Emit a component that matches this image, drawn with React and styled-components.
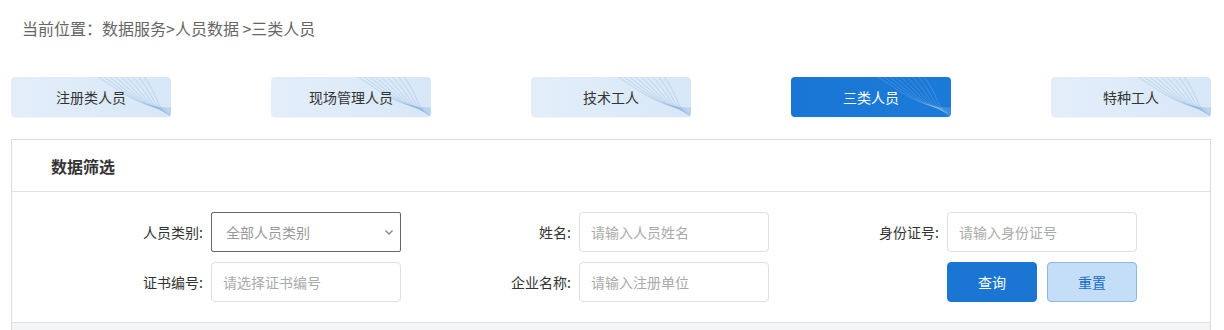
import React from 'react';
import styled, { createGlobalStyle } from 'styled-components';

const GlobalStyle = createGlobalStyle`
  body {
    margin: 0;
    background: #fff;
    font-family: "Noto Sans CJK SC", "Noto Sans", sans-serif;
  }
`;

const Page = styled.div`
  padding: 0 13px 0 11px;
`;

const Crumb = styled.div`
  height: 56px;
  padding-left: 11px;
  display: flex;
  align-items: center;
  font-size: 16px;
  color: #666;
`;

const Tabs = styled.div`
  margin-top: 21px;
  display: flex;
  justify-content: space-between;
  width: 1200px;
`;

const Tab = styled.div`
  position: relative;
  overflow: hidden;
  width: 160px;
  height: 40px;
  border-radius: 4px;
  display: flex;
  align-items: center;
  justify-content: center;
  font-size: 14px;
  color: ${p => (p.$active ? '#fff' : '#333')};
  background: ${p => (p.$active
    ? 'linear-gradient(90deg, #1a76d4, #1b7ad8)'
    : 'linear-gradient(90deg, #e3eefa, #d8e7f7)')};
  box-shadow: 0 1px 1px rgba(0, 0, 0, 0.04);
`;

const TabText = styled.span`
  position: relative;
`;

const Lines = styled.svg`
  position: absolute;
  right: 0;
  bottom: 0;
  pointer-events: none;
`;

const Panel = styled.div`
  margin-top: 22px;
  width: 1198px;
  border: 1px solid #dcdcdc;
  border-bottom: none;
`;

const PanelHead = styled.div`
  height: 51px;
  border-bottom: 1px solid #e2e2e2;
  display: flex;
  align-items: center;
  padding-left: 39px;
  font-size: 16px;
  font-weight: 700;
  color: #333;
`;

const PanelBody = styled.div`
  padding: 20px 0 20px 31px;
  display: grid;
  grid-template-columns: repeat(3, 358px);
  column-gap: 10px;
  row-gap: 10px;
  border-bottom: 1px solid #e2e2e2;
`;

const Footer = styled.div`
  height: 10px;
  background: #f4f5f7;
`;

const Field = styled.div`
  display: flex;
  align-items: center;
  gap: 8px;
`;

const Label = styled.label`
  width: 160px;
  text-align: right;
  font-size: 14px;
  color: #333;
`;

const Input = styled.input`
  box-sizing: border-box;
  width: 190px;
  height: 40px;
  border: 1px solid #dcdfe6;
  border-radius: 4px;
  padding: 0 11px;
  font-family: inherit;
  font-size: 14px;
  color: #333;
  outline: none;
  &::placeholder {
    color: #aaa;
  }
`;

const SelectBox = styled.div`
  position: relative;
  box-sizing: border-box;
  width: 190px;
  height: 40px;
  border: 1px solid #666;
  border-radius: 2px;
  display: flex;
  align-items: center;
  padding: 0 14px;
  font-size: 14px;
  color: #999;
`;

const Chevron = styled.svg`
  position: absolute;
  right: 6px;
  top: 14px;
`;

const Buttons = styled.div`
  padding-left: 168px;
  display: flex;
  gap: 10px;
`;

const Button = styled.button`
  box-sizing: border-box;
  width: 90px;
  height: 40px;
  border-radius: 4px;
  font-family: inherit;
  font-size: 14px;
  cursor: pointer;
  border: 1px solid ${p => (p.$primary ? '#1a76d2' : '#8cb8e2')};
  background: ${p => (p.$primary ? '#1a76d2' : '#c3def6')};
  color: ${p => (p.$primary ? '#fff' : '#1a6ec8')};
`;

const tabs = ['注册类人员', '现场管理人员', '技术工人', '三类人员', '特种工人'];

const TabLines = ({ active }) => (
  <Lines width="90" height="40" viewBox="0 0 90 40">
    {Array.from({ length: 9 }).map((_, i) => (
      <path
        key={i}
        d={`M${14 + i * 6} ${-2} C ${40 + i * 5} ${14 + i}, ${58 + i * 2} ${32}, ${92} ${31 + i * 1.2}`}
        fill="none"
        stroke={active ? 'rgba(255,255,255,0.22)' : 'rgba(120,170,220,0.45)'}
        strokeWidth="0.7"
      />
    ))}
  </Lines>
);

export default function App() {
  return (
    <Page>
      <GlobalStyle />
      <Crumb>当前位置：数据服务&gt;人员数据 &gt;三类人员</Crumb>
      <Tabs>
        {tabs.map(t => (
          <Tab key={t} $active={t === '三类人员'}>
            <TabLines active={t === '三类人员'} />
            <TabText>{t}</TabText>
          </Tab>
        ))}
      </Tabs>
      <Panel>
        <PanelHead>数据筛选</PanelHead>
        <PanelBody>
          <Field>
            <Label>人员类别:</Label>
            <SelectBox>
              全部人员类别
              <Chevron width="10" height="10" viewBox="0 0 10 10">
                <path d="M1.5 3.5 L5 7 L8.5 3.5" fill="none" stroke="#888" strokeWidth="1.4" />
              </Chevron>
            </SelectBox>
          </Field>
          <Field>
            <Label>姓名:</Label>
            <Input placeholder="请输入人员姓名" />
          </Field>
          <Field>
            <Label>身份证号:</Label>
            <Input placeholder="请输入身份证号" />
          </Field>
          <Field>
            <Label>证书编号:</Label>
            <Input placeholder="请选择证书编号" />
          </Field>
          <Field>
            <Label>企业名称:</Label>
            <Input placeholder="请输入注册单位" />
          </Field>
          <Buttons>
            <Button $primary>查询</Button>
            <Button>重置</Button>
          </Buttons>
        </PanelBody>
        <Footer />
      </Panel>
    </Page>
  );
}
